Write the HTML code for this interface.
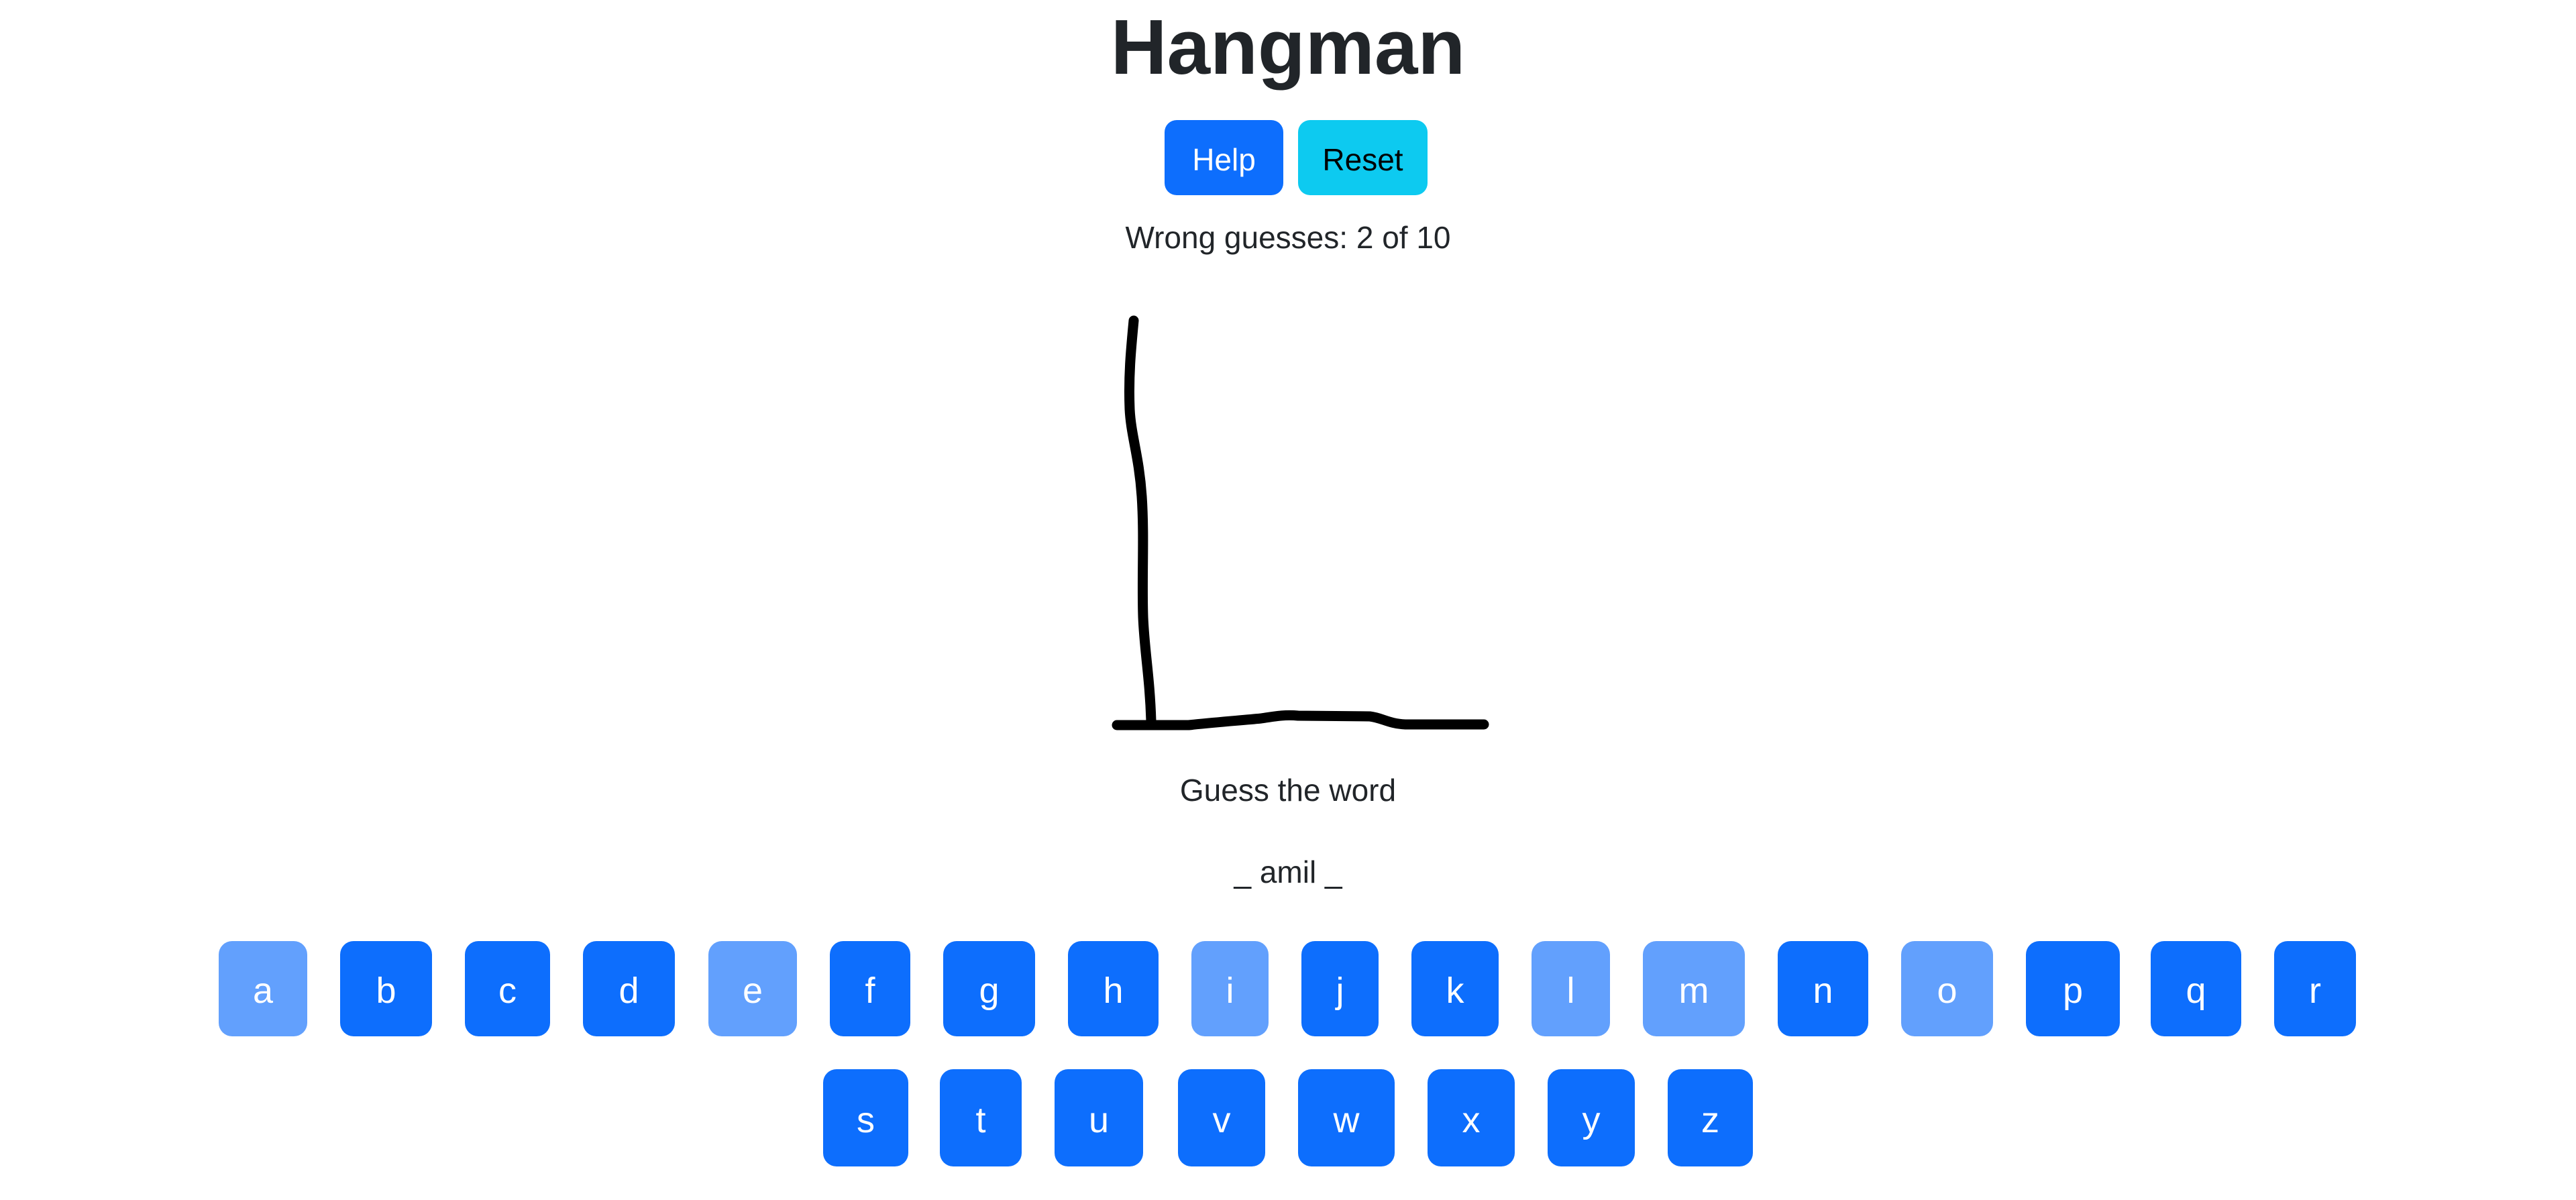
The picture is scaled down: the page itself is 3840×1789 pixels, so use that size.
<!DOCTYPE html>
<html><head><meta charset="utf-8"><style>
html,body{margin:0;padding:0;background:#fff;width:3840px;height:1789px;overflow:hidden;font-family:"Liberation Sans",sans-serif;color:#212529}
.a{position:absolute}
.t{position:absolute;left:0;width:3840px;text-align:center;white-space:nowrap}
.b{position:absolute;border-radius:20px;background:#0d6efd;color:#fff;display:flex;align-items:center;justify-content:center;font-size:54px;padding-top:6px;box-sizing:border-box}
.f{background:#62a0fd}
</style></head><body>
<div class="t" style="top:0px;font-size:116px;line-height:140px;font-weight:bold">Hangman</div>
<div class="b" style="left:1736px;top:179px;width:177px;height:112px;border-radius:18px;font-size:46px">Help</div>
<div class="b" style="left:1935px;top:179px;width:193px;height:112px;border-radius:18px;font-size:46px;background:#0dcaf0;color:#000">Reset</div>
<div class="t" style="top:326px;font-size:46px;line-height:56px">Wrong guesses: 2 of 10</div>
<svg class="a" style="left:0;top:0" width="3840" height="1200" viewBox="0 0 3840 1200">
<path d="M1690 478 C1686 520 1682 560 1684 610 C1686 650 1698 680 1702 740 C1706 800 1702 860 1704 920 C1706 970 1714 1010 1716 1075" fill="none" stroke="#000" stroke-width="15" stroke-linecap="round" stroke-linejoin="round"/>
<path d="M1665 1081 L1772 1081 C1820 1076 1850 1074 1880 1071 C1900 1068 1915 1065 1935 1067 L2042 1068 C2060 1070 2070 1079 2095 1080 L2212 1080" fill="none" stroke="#000" stroke-width="15" stroke-linecap="round" stroke-linejoin="round"/>
</svg>
<div class="t" style="top:1150px;font-size:46px;line-height:56px">Guess the word</div>
<div class="t" style="top:1272px;font-size:46px;line-height:56px">_ amil _</div>
<div class="b f" style="left:326px;top:1403px;width:132px;height:142px">a</div>
<div class="b" style="left:507px;top:1403px;width:137px;height:142px">b</div>
<div class="b" style="left:693px;top:1403px;width:127px;height:142px">c</div>
<div class="b" style="left:869px;top:1403px;width:137px;height:142px">d</div>
<div class="b f" style="left:1056px;top:1403px;width:132px;height:142px">e</div>
<div class="b" style="left:1237px;top:1403px;width:120px;height:142px">f</div>
<div class="b" style="left:1406px;top:1403px;width:137px;height:142px">g</div>
<div class="b" style="left:1592px;top:1403px;width:135px;height:142px">h</div>
<div class="b f" style="left:1776px;top:1403px;width:115px;height:142px">i</div>
<div class="b" style="left:1940px;top:1403px;width:115px;height:142px">j</div>
<div class="b" style="left:2104px;top:1403px;width:130px;height:142px">k</div>
<div class="b f" style="left:2283px;top:1403px;width:117px;height:142px">l</div>
<div class="b f" style="left:2449px;top:1403px;width:152px;height:142px">m</div>
<div class="b" style="left:2650px;top:1403px;width:135px;height:142px">n</div>
<div class="b f" style="left:2834px;top:1403px;width:137px;height:142px">o</div>
<div class="b" style="left:3020px;top:1403px;width:140px;height:142px">p</div>
<div class="b" style="left:3206px;top:1403px;width:135px;height:142px">q</div>
<div class="b" style="left:3390px;top:1403px;width:122px;height:142px">r</div>
<div class="b" style="left:1227px;top:1594px;width:127px;height:145px">s</div>
<div class="b" style="left:1401px;top:1594px;width:122px;height:145px">t</div>
<div class="b" style="left:1572px;top:1594px;width:132px;height:145px">u</div>
<div class="b" style="left:1756px;top:1594px;width:130px;height:145px">v</div>
<div class="b" style="left:1935px;top:1594px;width:144px;height:145px">w</div>
<div class="b" style="left:2128px;top:1594px;width:130px;height:145px">x</div>
<div class="b" style="left:2307px;top:1594px;width:130px;height:145px">y</div>
<div class="b" style="left:2486px;top:1594px;width:127px;height:145px">z</div>
</body></html>
